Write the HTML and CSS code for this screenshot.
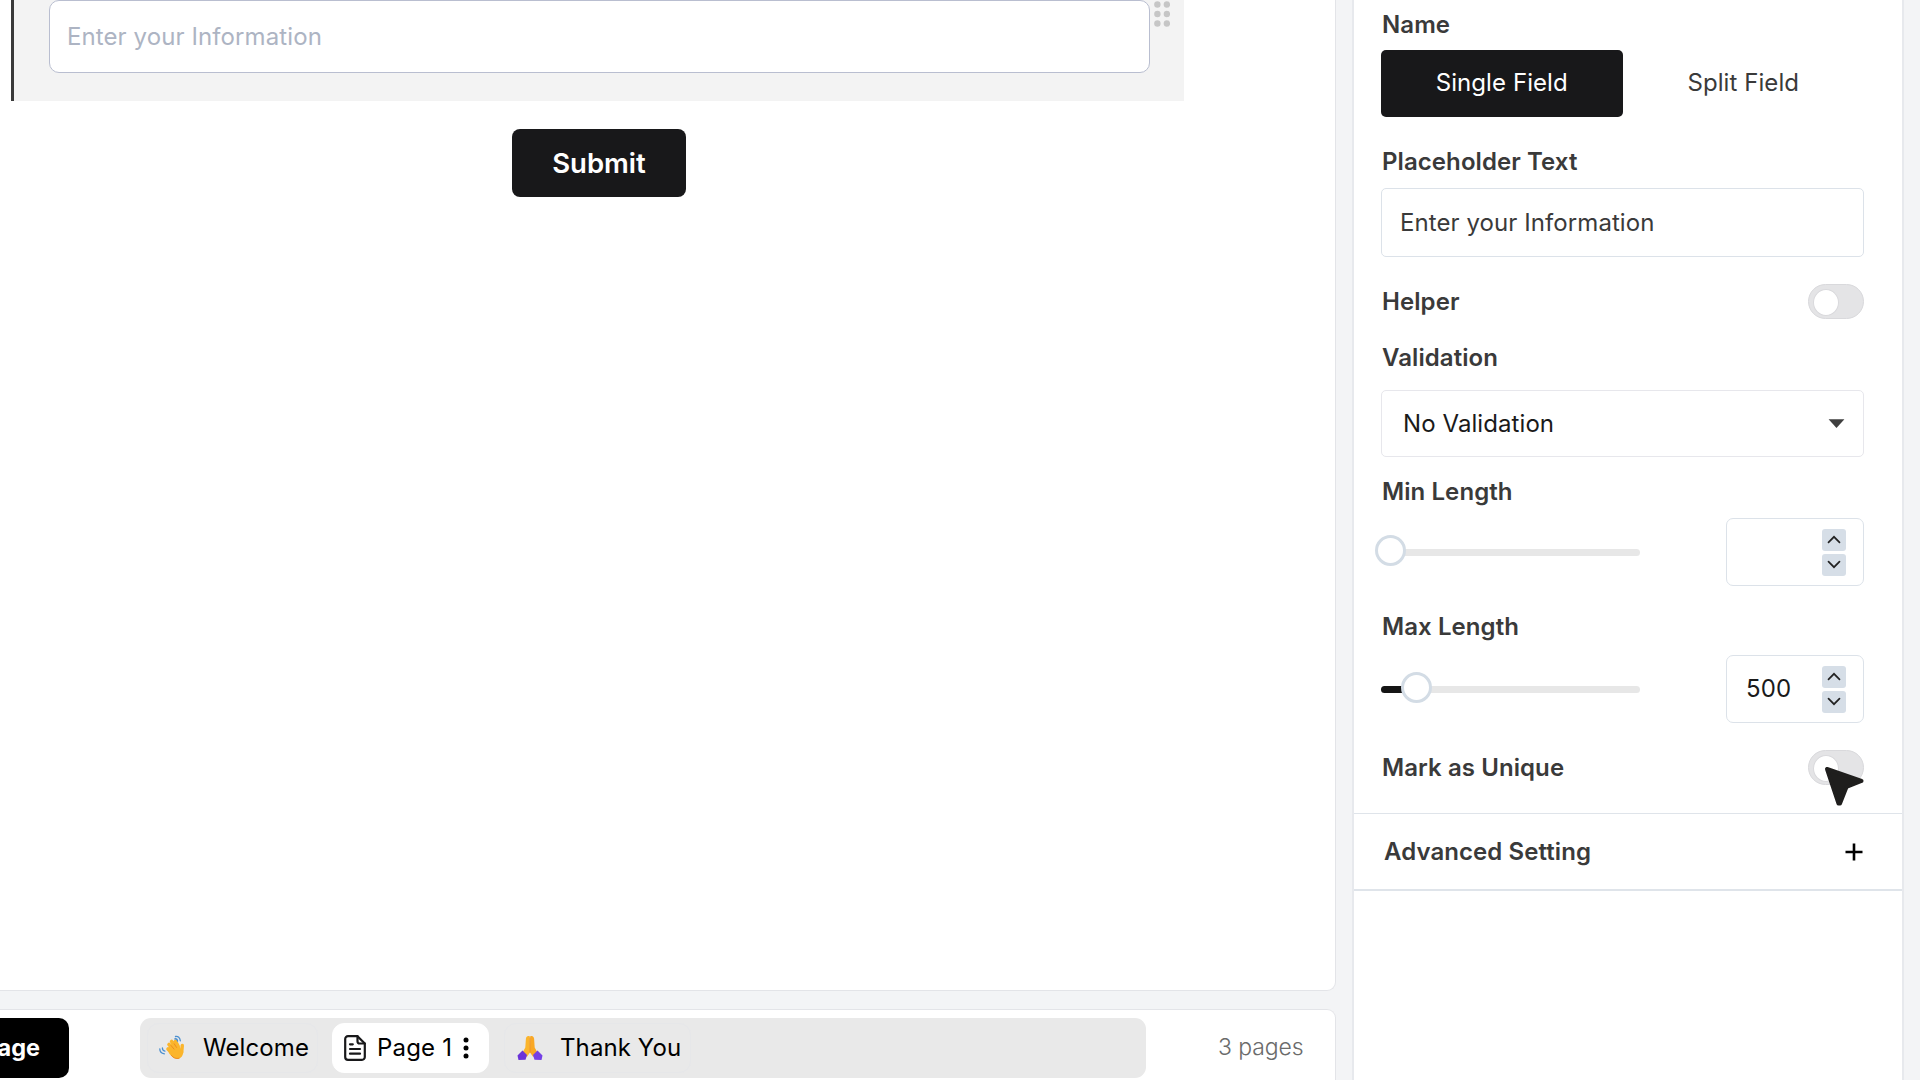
FILE: index.html
```html
<!DOCTYPE html>
<html lang="en">

<head>
    <meta charset="UTF-8">
    <meta name="viewport" content="width=device-width, initial-scale=1.0">
    <title>Form Builder</title>
    <link rel="stylesheet" href="styles.css">
</head>

<body>
    <div class="builder">
        <main class="workspace">
            <section class="canvas">
                <div class="field-block">
                    <div class="field-input">Enter your Information</div>
                    <svg class="drag-handle" width="16" height="26" viewBox="0 0 16 26" fill="#c6c6c6">
                        <circle cx="3.4" cy="3.5" r="3.2" />
                        <circle cx="12.9" cy="3.5" r="3.2" />
                        <circle cx="3.4" cy="13" r="3.2" />
                        <circle cx="12.9" cy="13" r="3.2" />
                        <circle cx="3.4" cy="22.5" r="3.2" />
                        <circle cx="12.9" cy="22.5" r="3.2" />
                    </svg>
                </div>
                <button type="button" class="submit-btn">Submit</button>
            </section>

            <footer class="page-bar">
                <button type="button" class="add-page">age</button>
                <div class="page-tabs">
                    <div class="page-tab welcome">
                        <svg class="emoji" width="26" height="26" viewBox="0 0 26 26" fill="none">
                            <g stroke="#fbb52c" stroke-linecap="round">
                                <path d="M9 14l5 5M10 9.500l6 6.500M12.600 6.500l4.600 6.500M16.500 6.300l2.600 5" stroke-width="3.600" />
                                <path d="M23.300 10.500l-.6 6.500" stroke-width="3.400" />
                            </g>
                            <path d="M9 13l4-4 5.500-1 3.500 6 2.300 2.500c0 4-2.300 7.300-6 7.300-3.500 0-6.500-2.800-8.500-6z" fill="#fbb52c" />
                            <path d="M12 10.500l3 3.600M15.200 8.800l2.300 3.600M12.500 20.500c1.800 2.400 4.500 3.600 7.500 2.800" stroke="#ee8c22" stroke-width="1" stroke-linecap="round" />
                            <path d="M16.500 1.500c2.500-.5 4.500 1 4.800 4.300M15.800 3.800c1.700-.2 2.600.7 2.800 2.300M.8 13.800c0 3 1.600 4.700 4.600 5M3.400 13c0 1.900.9 2.800 2.500 3.100" stroke="#4a8fd0" stroke-width="1.300" stroke-linecap="round" />
                        </svg>
                        <span>Welcome</span>
                    </div>
                    <div class="page-tab active">
                        <svg width="22" height="26" viewBox="0 0 22 26" fill="none" stroke="#18181a" stroke-width="2.200" stroke-linecap="round" stroke-linejoin="round">
                            <path d="M13.500 1.200H4a2.800 2.800 0 0 0-2.800 2.800v18A2.800 2.800 0 0 0 4 24.800h14a2.800 2.800 0 0 0 2.800-2.800V8.500z" />
                            <path d="M13.500 1.200v5a2.300 2.300 0 0 0 2.300 2.300h5" />
                            <path d="M6 9.300h2.800M6 14h10M6 18.700h10" />
                        </svg>
                        <span>Page 1</span>
                        <svg width="6" height="22" viewBox="0 0 6 22" fill="#000">
                            <circle cx="3" cy="3" r="2.500" />
                            <circle cx="3" cy="11" r="2.500" />
                            <circle cx="3" cy="19" r="2.500" />
                        </svg>
                    </div>
                    <div class="page-tab thanks">
                        <svg class="emoji" width="26" height="26" viewBox="0 0 26 26">
                            <path d="M12.800 1.200c-2.300-.8-3.500.2-3.900 2.500L8.300 12.500l-3 5.500 4.500 4 3.200-4.500z" fill="#fbb52c" />
                            <path d="M13.200 1.200c2.300-.8 3.500.2 3.900 2.500l.6 8.800 3 5.500-4.500 4-3.200-4.500z" fill="#f9a825" />
                            <path d="M13 2.500v15" stroke="#ee8c22" stroke-width=".8" />
                            <path d="M5.500 15.500l4.500 4.500-1.500 4.700-7 .3-1-4.500z" fill="#6a33d8" />
                            <path d="M20.500 15.500L16 20l1.500 4.700 7 .3 1-4.500z" fill="#7440e6" />
                        </svg>
                        <span>Thank You</span>
                    </div>
                </div>
                <span class="page-count">3 pages</span>
            </footer>
        </main>

        <aside class="settings">
            <div class="settings-body">
                <h3>Name</h3>
                <div class="segmented">
                    <button type="button" class="segment selected">Single Field</button>
                    <button type="button" class="segment">Split Field</button>
                </div>

                <h3 class="placeholder-label">Placeholder Text</h3>
                <div class="text-input">Enter your Information</div>

                <div class="toggle-row">
                    <h3>Helper</h3>
                    <div class="toggle"></div>
                </div>

                <h3 class="validation-label">Validation</h3>
                <div class="select">
                    <span>No Validation</span>
                    <svg width="17" height="10" viewBox="0 0 17 10" fill="#3f3f3f">
                        <path d="M.6 0.300h15.800L8.500 9z" />
                    </svg>
                </div>

                <h3 class="min-label">Min Length</h3>
                <div class="range-row">
                    <div class="slider">
                        <div class="thumb min"></div>
                    </div>
                    <div class="number">
                        <span></span>
                        <div class="steps">
                            <div class="step"><svg width="14" height="9" viewBox="0 0 14 9"><path d="M1.500 7.300L7 1.800l5.500 5.500" /></svg></div>
                            <div class="step"><svg width="14" height="9" viewBox="0 0 14 9"><path d="M1.500 1.700L7 7.200l5.500-5.500" /></svg></div>
                        </div>
                    </div>
                </div>

                <h3 class="max-label">Max Length</h3>
                <div class="range-row max-row">
                    <div class="slider">
                        <div class="slider-fill"></div>
                        <div class="thumb max"></div>
                    </div>
                    <div class="number">
                        <span>500</span>
                        <div class="steps">
                            <div class="step"><svg width="14" height="9" viewBox="0 0 14 9"><path d="M1.500 7.300L7 1.800l5.500 5.500" /></svg></div>
                            <div class="step"><svg width="14" height="9" viewBox="0 0 14 9"><path d="M1.500 1.700L7 7.200l5.500-5.500" /></svg></div>
                        </div>
                    </div>
                </div>

                <div class="toggle-row">
                    <h3>Mark as Unique</h3>
                    <div class="toggle">
                        <svg class="cursor" width="42" height="42" viewBox="0 0 42 42">
                            <path d="M4 4l34.500 12-15 6L17 38.500 15.500 38.500z" fill="#1f1e1d" stroke="#1f1e1d" stroke-width="4" stroke-linejoin="round" />
                        </svg>
                    </div>
                </div>
            </div>

            <div class="accordion">
                <h3>Advanced Setting</h3>
                <svg width="18" height="18" viewBox="0 0 18 18" stroke="#000" stroke-width="2.600">
                    <path d="M9 .5v17M.5 9h17" />
                </svg>
            </div>
        </aside>
    </div>
</body>

</html>
```

FILE: styles.css
```css
* {
    box-sizing: border-box;
}

body {
    margin: 0;
    font-family: Inter, sans-serif;
    font-size: 24px;
    line-height: 30px;
    color: #3a3a3a;
    background-color: #f3f4f6;
    overflow: hidden;
}

button {
    font: inherit;
    letter-spacing: inherit;
    border: none;
    padding: 0;
}

svg {
    display: block;
    flex-shrink: 0;
}

h3 {
    margin: 0;
    padding-left: 1px;
    font-size: 24px;
    font-weight: 600;
    line-height: 30px;
    color: #3a3a3a;
}

.builder {
    display: flex;
    gap: 16px;
    width: 1920px;
    height: 1080px;
}

/* Left side */
.workspace {
    display: flex;
    flex-direction: column;
    gap: 18px;
    width: 1336px;
}

.canvas {
    display: flex;
    flex-direction: column;
    align-items: flex-start;
    height: 991px;
    padding-left: 11px;
    background-color: #fff;
    border-right: 1px solid #e3e4e8;
    border-bottom: 1px solid #e3e4e8;
    border-bottom-right-radius: 9px;
}

.field-block {
    display: flex;
    align-items: flex-start;
    gap: 4px;
    width: 1173px;
    height: 101px;
    padding-left: 35px;
    background-color: #f3f3f3;
    border-left: 3px solid #3a3a3a;
}

.field-input {
    width: 1101px;
    height: 73px;
    padding: 21px 17px;
    letter-spacing: 0.1px;
    color: #adb4c3;
    background-color: #fff;
    border: 1px solid #b9bed0;
    border-radius: 10px;
}

.drag-handle {
    margin-top: 1px;
}

.submit-btn {
    width: 174px;
    height: 68px;
    margin: 28px 0 0 501px;
    font-size: 27.5px;
    font-weight: 600;
    color: #fff;
    background-color: #18181a;
    border-radius: 8px;
}

.page-bar {
    display: flex;
    align-items: flex-start;
    flex: 1;
    padding-top: 8px;
    background-color: #fff;
    border-top: 1px solid #e3e4e8;
    border-right: 1px solid #e3e4e8;
    border-top-right-radius: 9px;
}

.add-page {
    width: 69px;
    height: 60px;
    padding-right: 29px;
    font-size: 23.5px;
    font-weight: 700;
    text-align: right;
    color: #fff;
    background-color: #000;
    border-radius: 0 10px 10px 0;
    /* the start of the label sits outside the window */
    direction: rtl;
}

.page-tabs {
    display: flex;
    align-items: center;
    width: 1006px;
    height: 60px;
    margin-left: 71px;
    padding-left: 7px;
    background-color: #e9e9e9;
    border-radius: 11px;
}

.page-tab {
    display: flex;
    align-items: center;
    height: 50px;
    color: #000;
    border: 1px solid #e6e7e9;
    border-radius: 12px;
}

.welcome {
    width: 171px;
    padding-left: 11px;
    gap: 18px;
    letter-spacing: 0.1px;
}

.page-tab.active {
    width: 157px;
    margin-left: 14px;
    padding-left: 11px;
    gap: 11px;
    letter-spacing: 0.2px;
    background-color: #fff;
    border-color: #fff;
}

.thanks {
    width: 187px;
    margin-left: 15px;
    padding-left: 12px;
    gap: 17px;
    letter-spacing: 0.1px;
}

.page-count {
    margin: 14px 0 0 72px;
    font-size: 23px;
    font-weight: 350;
    letter-spacing: -0.1px;
    color: #6b6b6b;
    white-space: nowrap;
}

/* Settings panel */
.settings {
    width: 552px;
    letter-spacing: 0.08px;
    background-color: #fff;
    border-left: 2px solid #e7e9ed;
    border-right: 2px solid #e7e9ed;
}

.settings-body {
    height: 813px;
    padding: 10px 38px 0 27px;
}

.segmented {
    display: flex;
    height: 67px;
    margin-top: 10px;
}

.segment {
    flex: 1;
    padding-bottom: 1px;
    color: #3a3a3a;
    background-color: #fff;
    border-radius: 5px;
}

.segment.selected {
    color: #fff;
    background-color: #18181a;
}

.placeholder-label {
    margin-top: 30px;
}

.text-input {
    height: 69px;
    margin-top: 11px;
    padding: 19px 18px;
    border: 1px solid #dce2e9;
    border-radius: 5px;
}

.toggle-row {
    display: flex;
    align-items: center;
    justify-content: space-between;
    margin-top: 27px;
}

.toggle {
    position: relative;
    width: 56px;
    height: 35px;
    padding: 4px;
    background-color: #e4e4e6;
    border: 1px solid #d9d9dc;
    border-radius: 18px;
}

.toggle::before {
    content: "";
    display: block;
    width: 24px;
    height: 25px;
    background-color: #fff;
    border: 1px solid #d9d9dc;
    border-radius: 50%;
}

/* Pointer drawn over the last toggle */
.cursor {
    position: absolute;
    top: 14px;
    left: 14px;
}

.validation-label {
    margin-top: 24px;
}

.select {
    display: flex;
    align-items: center;
    justify-content: space-between;
    height: 67px;
    margin-top: 17px;
    padding: 0 18px 0 21px;
    color: #1a1a1a;
    border: 1px solid #e7e7ec;
    border-radius: 5px;
}

.min-label {
    margin-top: 20px;
}

.max-label {
    margin-top: 26px;
}

.range-row {
    display: flex;
    align-items: center;
    justify-content: space-between;
    margin-top: 11px;
}

.max-row {
    margin-top: 13px;
}

.slider {
    position: relative;
    width: 259px;
    height: 7px;
    background-color: #e7e7e7;
    border-radius: 4px;
}

.slider-fill {
    width: 36px;
    height: 7px;
    background-color: #151515;
    border-radius: 4px;
}

.thumb {
    position: absolute;
    top: -14px;
    width: 31px;
    height: 31px;
    background-color: #fff;
    border: 3px solid #d3dce5;
    border-radius: 50%;
}

.thumb.min {
    left: -6px;
}

.thumb.max {
    left: 20px;
}

.number {
    display: flex;
    align-items: center;
    justify-content: space-between;
    width: 138px;
    height: 68px;
    padding: 0 17px 0 19px;
    color: #1a1a1a;
    border: 1px solid #dce2e9;
    border-radius: 7px;
}

.steps {
    display: flex;
    flex-direction: column;
    gap: 3px;
}

.step {
    display: flex;
    align-items: center;
    justify-content: center;
    width: 24px;
    height: 22px;
    background-color: #d6dee7;
    border-radius: 3px;
}

.step path {
    fill: none;
    stroke: #222;
    stroke-width: 1.7;
    stroke-linecap: round;
}

.accordion {
    display: flex;
    align-items: center;
    justify-content: space-between;
    height: 78px;
    padding: 0 39px 0 29px;
    border-top: 1px solid #dfe4ea;
    border-bottom: 2px solid #dfe4ea;
}
```
